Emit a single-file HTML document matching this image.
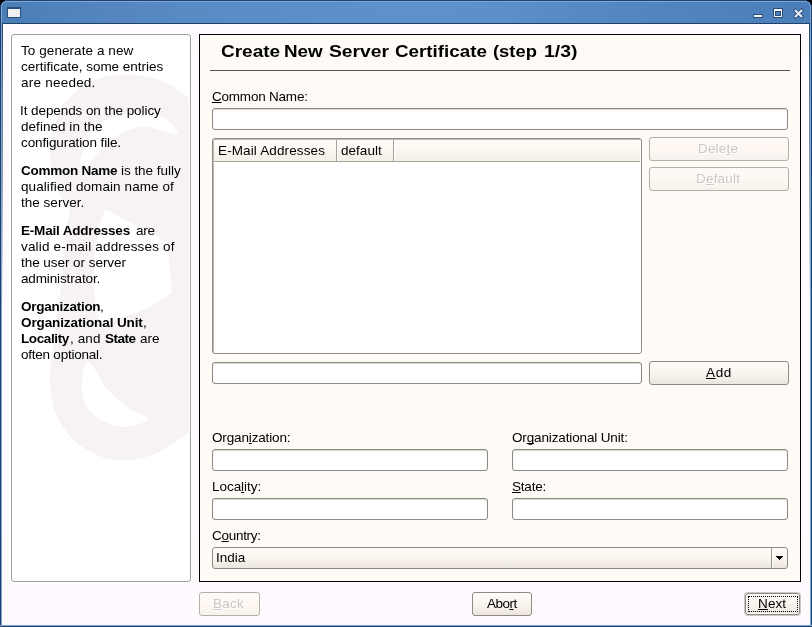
<!DOCTYPE html>
<html>
<head>
<meta charset="utf-8">
<title>YaST</title>
<style>
html,body{margin:0;padding:0;}
body{width:812px;height:627px;overflow:hidden;background:#fdfbfe;font-family:"Liberation Sans",sans-serif;font-size:13.5px;color:#000;position:relative;}
.abs{position:absolute;}
#win{position:absolute;left:0;top:0;width:812px;height:627px;background:#fefaff;overflow:hidden;}
.dith{position:absolute;left:2px;width:808px;background:#fffaff conic-gradient(from 0deg at 50% 50%,#f9f9f8 25%,#fffaff 0) 0 0/2px 2px;}
#titlebar{position:absolute;left:0;top:0;width:812px;height:24px;background:linear-gradient(to right,#4a7cb6 0px,#5082bc 60px,#5586bf 120px,#598bc5 200px,#5c8fc9 300px,#5e91cb 400px,#5d90ca 500px,#588bc5 560px,#5386c0 640px,#4f82bc 720px,#4b7eb8 812px);}
#tb-top{position:absolute;left:0;top:0;width:812px;height:1px;background:#23446a;}
#tb-hl{position:absolute;left:1px;top:1px;width:810px;height:1px;background:#7aa7dc;}
#tb-bot{position:absolute;left:2px;top:23px;width:808px;height:1px;background:#1f4068;}
#bl{position:absolute;left:0;top:0;width:2px;height:627px;background:linear-gradient(to right,#1f4068 0,#1f4068 1px,#7aa6da 1px);}
#bl3,#br3{position:absolute;left:2px;top:23px;width:1px;height:602px;background:linear-gradient(to bottom,#1f4068 0,#5f7797 72px,#9299a6 152px,#fdf9f3 280px);}
#br3{left:809px;}
#bl4,#br4{position:absolute;left:3px;top:24px;width:1px;height:601px;background:#fff;}
#br4{left:808px;}
#bl2{position:absolute;left:2px;top:2px;width:1px;height:21px;background:#4a7cb6;}
#br{position:absolute;left:810px;top:0;width:2px;height:627px;background:linear-gradient(to right,#7aa6da 0,#7aa6da 1px,#1f4068 1px);}
#bb{position:absolute;left:0;top:625px;width:812px;height:2px;background:linear-gradient(to bottom,#7aa6da 0,#7aa6da 1px,#1f4068 1px);}
.txt{position:absolute;white-space:nowrap;line-height:16px;height:16px;will-change:transform;}
.b{font-weight:bold;}
.s{white-space:pre;}
.hw{font-size:17px;line-height:20px;height:20px;transform-origin:0 50%;}
/*FIT*/
#h1a{letter-spacing:0.071px;margin-left:0px}
#h2a{letter-spacing:-0.01px;margin-left:0.0px}
#h3a{letter-spacing:0.23px;margin-left:0.0px}
#h4a{letter-spacing:-0.078px;margin-left:-1.0px}
#h5a{letter-spacing:0.038px;margin-left:0.0px}
#h6a{letter-spacing:-0.111px;margin-left:0.0px}
#h7a{letter-spacing:-0.25px;margin-left:0.0px}
#h7b{letter-spacing:-0.035px;margin-left:0px}
#h8a{letter-spacing:0.087px;margin-left:0.0px}
#h9a{letter-spacing:0.02px;margin-left:0.0px}
#h10a{letter-spacing:-0.193px;margin-left:0.0px}
#h10b{letter-spacing:-0.3px;margin-left:0.0px}
#h11a{letter-spacing:0.175px;margin-left:0.0px}
#h12a{letter-spacing:-0.047px;margin-left:0.0px}
#h13a{letter-spacing:-0.135px;margin-left:0.0px}
#h14a{letter-spacing:-0.263px;margin-left:0.0px}
#h14b{letter-spacing:0px;margin-left:0.0px}
#h15a{letter-spacing:-0.106px;margin-left:0.0px}
#h15b{letter-spacing:0px;margin-left:0.0px}
#h16a{letter-spacing:-0.379px;margin-left:0.0px}
#h16b{letter-spacing:0.1px;margin-left:0px}
#h16c{letter-spacing:-0.494px;margin-left:0.0px}
#h16d{letter-spacing:0.0px;margin-left:0.0px}
#h17a{letter-spacing:-0.236px;margin-left:0.0px}
#l1{letter-spacing:-0.215px;margin-left:0.0px}
#l2{letter-spacing:0.124px;margin-left:0px}
#l3{letter-spacing:0.036px;margin-left:0.0px}
#l4{letter-spacing:-0.148px;margin-left:0.0px}
#l5{letter-spacing:-0.139px;margin-left:0.0px}
#l6{letter-spacing:-0.045px;margin-left:0px}
#l7{letter-spacing:-0.2px;margin-left:0.0px}
#l8{letter-spacing:-0.282px;margin-left:0.0px}
#l9{letter-spacing:-0.006px;margin-left:-1.0px}
#b1{letter-spacing:0.18px}
#b2{letter-spacing:0.189px}
#b3{letter-spacing:0.675px}
#b4{letter-spacing:0.269px}
#b5{letter-spacing:-0.514px}
#b6{letter-spacing:0.115px}
#hw0{transform:scaleX(1.1177);margin-left:1px}
#hw1{transform:scaleX(1.1085);margin-left:-0.41px}
#hw2{transform:scaleX(1.1324);margin-left:0.45px}
#hw3{transform:scaleX(1.1053);margin-left:0.36px}
#hw4{transform:scaleX(1.0806);margin-left:-0.04px}
#hw5{transform:scaleX(1.1379);margin-left:-0.31px}
/*ENDFIT*/
u{text-decoration:underline;text-decoration-thickness:1px;text-underline-offset:1px;text-decoration-skip-ink:none;}
#help{position:absolute;left:11px;top:34px;width:178px;height:546px;border:1px solid #a19e96;border-radius:3px;background:#fff;overflow:hidden;box-shadow:0 0 0 1px #fff;}
#main{position:absolute;left:199px;top:34px;width:600px;height:546px;border:1px solid #000;background:#fefaf5;box-shadow:inset 0 0 0 1px #fff,0 0 0 1px #fff;}
.inp{position:absolute;box-sizing:border-box;height:22px;background:#fff;border:1px solid #8d8a84;border-radius:3px;box-shadow:inset 0 1px 1px #d8d5d0;}
.btn{position:absolute;box-sizing:border-box;height:24px;border:1px solid #8f8b84;border-radius:3px;background:linear-gradient(to bottom,#fffdfa 0,#f8f4ed 55%,#ebe5dc 100%);text-align:center;line-height:21px;white-space:nowrap;}
.bl{display:inline-block;will-change:transform;position:relative;}
#b1{left:-1px}#b2{left:-.5px}#b4{left:-.5px}#b5{left:-.5px}#b6{left:-.5px}
.btn.dis{color:#c9c8c6;text-shadow:1px 1px 0 #fff;border-color:#b3b0a6;background:linear-gradient(to bottom,#fff9fa 0,#fef7f2 50%,#f4f3ed 100%);}
</style>
</head>
<body>
<div id="win">
  <div class="abs" style="left:3px;top:24px;width:806px;height:1px;background:#fff;"></div>
  <div class="dith" style="top:34px;height:22px;"></div>
  <div class="dith" style="top:536px;height:90px;"></div>
  <div id="titlebar"></div>
  <div id="tb-top"></div><div id="tb-hl"></div><div id="tb-bot"></div>
  <div id="bl"></div><div id="bl2"></div><div id="bl3"></div><div id="bl4"></div><div id="br4"></div><div id="br3"></div><div id="br"></div><div id="bb"></div>
  <svg class="abs" style="left:0;top:0" width="812" height="6" viewBox="0 0 812 6"><path d="M0 0 H5 V1 H3 V2 H2 V3 H1 V5 H0 Z" fill="#000"/><path d="M812 0 H807 V1 H809 V2 H810 V3 H811 V5 H812 Z" fill="#000"/><path d="M3 1 H5 V2 H3 Z M2 2 H3 V3 H2 Z M1 3 H2 V5 H1Z" fill="#23446a"/><path d="M3 2 H5 V3 H3 Z M2 3 H3 V5 H2 Z" fill="#7aa7dc"/><path d="M809 1 H807 V2 H809 Z M810 2 H809 V3 H810 Z M811 3 H810 V5 H811Z" fill="#23446a"/><path d="M809 2 H807 V3 H809 Z M810 3 H809 V5 H810 Z" fill="#7aa7dc"/></svg>

  <!-- window menu icon -->
  <div class="abs" style="left:7px;top:7px;width:14px;height:11px;background:#2b4f7c;"></div>
  <div class="abs" style="left:8px;top:9px;width:12px;height:8px;background:#f0f0f0;"></div>

  <!-- window controls -->
  <svg class="abs" style="left:750px;top:4px" width="56" height="18" viewBox="750 4 56 18" shape-rendering="crispEdges">
    <rect x="753" y="14" width="10" height="4" fill="#2a4d7b"/>
    <rect x="754" y="15" width="8" height="2" fill="#f4f6fa"/>
    <rect x="773" y="8" width="10" height="10" fill="#2a4d7b"/>
    <rect x="774" y="9" width="8" height="8" fill="#f4f6fa"/>
    <rect x="775" y="11" width="6" height="5" fill="#2a4d7b"/>
    <rect x="776" y="12" width="4" height="3" fill="#4e81bb"/>
  </svg>
  <svg class="abs" style="left:790px;top:5px" width="16" height="16" viewBox="790 5 16 16">
    <path d="M795.300 10.300 L801.700 16.700 M801.700 10.300 L795.300 16.700" stroke="#2a4d7b" stroke-width="3.800" stroke-linecap="round" fill="none"/>
    <path d="M795.500 10.500 L801.500 16.500 M801.500 10.500 L795.500 16.500" stroke="#e8eef6" stroke-width="2.100" stroke-linecap="round" fill="none"/>
  </svg>
  <!-- help panel -->
  <div id="help">
    <svg class="abs" style="left:0;top:0" width="177" height="546" viewBox="12 35 177 546">
      <path d="M195.0 103.0 C193.0 101.4 188.0 97.0 183.0 93.5 C178.0 90.0 172.1 85.0 165.0 82.0 C157.9 79.0 149.0 76.7 140.5 75.6 C132.0 74.5 123.2 74.1 114.0 75.6 C104.8 77.1 93.7 79.3 85.0 84.5 C76.3 89.7 67.5 98.6 62.0 107.0 C56.5 115.4 54.0 127.5 52.0 135.0 C50.0 142.5 49.8 145.2 50.0 152.0 C50.2 158.8 51.3 168.8 53.0 176.0 C54.7 183.2 57.5 189.7 60.0 195.0 C62.5 200.3 66.3 205.0 68.0 208.0 C69.7 211.0 70.2 210.2 70.0 213.0 C69.8 215.8 67.8 220.5 67.0 225.0 C66.2 229.5 65.6 233.5 65.0 240.0 C64.4 246.5 64.2 256.0 63.5 264.0 C62.8 272.0 62.4 277.0 61.0 288.0 C59.6 299.0 56.8 314.5 55.0 330.0 C53.2 345.5 49.8 367.0 50.0 381.0 C50.2 395.0 51.8 404.0 56.0 414.0 C60.2 424.0 67.3 433.8 75.0 441.0 C82.7 448.2 92.9 453.8 102.0 457.0 C111.1 460.2 120.0 460.8 129.5 460.0 C139.0 459.2 149.2 456.5 159.0 452.0 C168.8 447.5 182.0 437.2 188.0 433.0 C194.0 428.8 193.8 428.0 195.0 427.0 Z" fill="#f6f2f6"/>
      <path d="M178.5 134.0 C177.8 131.4 168.8 119.4 160.6 116.0 C152.3 112.6 139.8 111.8 129.0 113.6 C118.2 115.4 104.0 119.6 96.0 127.0 C88.0 134.4 83.0 150.5 81.0 158.0 C79.0 165.5 81.9 172.0 84.0 172.0 C86.1 172.0 88.6 163.7 93.6 158.0 C98.5 152.3 105.9 143.2 113.7 138.0 C121.5 132.8 131.9 128.1 140.5 127.0 C149.1 125.9 158.7 130.3 165.0 131.5 C171.3 132.7 179.2 136.6 178.5 134.0 Z" fill="#ffffff"/>
      <path d="M105 209 L167 242 L172 293 L144 310 L100 325 C95 305 93 285 93.500 269 C94 248 98 228 105 209 Z" fill="#ffffff"/>
      <path d="M88.8 362.0 C93.1 363.4 100.9 381.7 107.7 389.4 C114.5 397.1 122.6 403.5 129.4 408.4 C136.2 413.3 149.3 415.9 148.4 419.0 C147.5 422.1 132.1 427.0 124.0 427.0 C115.9 427.0 106.1 423.0 99.6 419.0 C93.0 415.0 87.6 409.3 84.7 403.0 C81.8 396.7 81.3 387.8 82.0 381.0 C82.7 374.2 84.5 360.6 88.8 362.0 Z" fill="#ffffff"/>
    </svg>
  </div>

  <!-- main panel -->
  <div id="main"></div>

  <!-- help text -->
  <div class="txt" id="h1a" style="left:21px;top:43px">To generate a new</div>
  <div class="txt" id="h2a" style="left:21px;top:59px">certificate, some entries</div>
  <div class="txt" id="h3a" style="left:21px;top:75px">are needed.</div>
  <div class="txt" id="h4a" style="left:21px;top:103px">It depends on the policy</div>
  <div class="txt" id="h5a" style="left:21px;top:119px">defined in the</div>
  <div class="txt" id="h6a" style="left:21px;top:135px">configuration file.</div>
  <div class="txt b" id="h7a" style="left:21px;top:163px">Common Name</div>
  <div class="txt" id="h7b" style="left:121px;top:163px">is the fully</div>
  <div class="txt" id="h8a" style="left:21px;top:179px">qualified domain name of</div>
  <div class="txt" id="h9a" style="left:21px;top:195px">the server.</div>
  <div class="txt b" id="h10a" style="left:21px;top:223px">E-Mail Addresses</div>
  <div class="txt" id="h10b" style="left:135.5px;top:223px">are</div>
  <div class="txt" id="h11a" style="left:21px;top:239px">valid e-mail addresses of</div>
  <div class="txt" id="h12a" style="left:21px;top:255px">the user or server</div>
  <div class="txt" id="h13a" style="left:21px;top:271px">administrator.</div>
  <div class="txt b" id="h14a" style="left:21px;top:299px">Organization</div>
  <div class="txt" id="h14b" style="left:100.3px;top:299px">,</div>
  <div class="txt b" id="h15a" style="left:21px;top:315px">Organizational Unit</div>
  <div class="txt" id="h15b" style="left:143.3px;top:315px">,</div>
  <div class="txt b" id="h16a" style="left:21px;top:331px">Locality</div>
  <div class="txt" id="h16b" style="left:70.3px;top:331px">, and</div>
  <div class="txt b" id="h16c" style="left:105px;top:331px">State</div>
  <div class="txt" id="h16d" style="left:139.8px;top:331px">are</div>
  <div class="txt" id="h17a" style="left:21px;top:347px">often optional.</div>

  <!-- heading -->
  <div class="txt b hw" id="hw0" style="left:219.7px;top:42px">Create</div>
  <div class="txt b hw" id="hw1" style="left:284.5px;top:42px">New</div>
  <div class="txt b hw" id="hw2" style="left:329.0px;top:42px">Server</div>
  <div class="txt b hw" id="hw3" style="left:394.2px;top:42px">Certificate</div>
  <div class="txt b hw" id="hw4" style="left:492.6px;top:42px">(step</div>
  <div class="txt b hw" id="hw5" style="left:543.9px;top:42px">1/3)</div>
  <div class="abs" style="left:210px;top:70px;width:580px;height:1px;background:#55534c;"></div>

  <div class="txt" id="l1" style="left:212px;top:89px"><u>C</u>ommon Name:</div>
  <div class="inp" style="left:212px;top:108px;width:576px;"></div>

  <!-- table -->
  <div class="abs" id="table" style="left:212px;top:138px;width:430px;height:216px;box-sizing:border-box;border:1px solid #8d8e88;border-radius:3px;background:#fff;box-shadow:inset 1px 1px 0 #bcbcb2;"></div>
  <div class="abs" style="left:214px;top:140px;width:426px;height:21px;background:linear-gradient(to bottom,#ffffff 0,#fffdfb 1px,#fef8f3 8px,#f6f4ed 13px,#f4efe8 21px);border-bottom:1px solid #a5a59b;"></div>
  <div class="abs" style="left:336px;top:140px;width:1px;height:21px;background:#a3a39a;"></div><div class="abs" style="left:337px;top:140px;width:1px;height:21px;background:#fff;"></div>
  <div class="abs" style="left:393px;top:140px;width:1px;height:21px;background:#a3a39a;"></div><div class="abs" style="left:394px;top:140px;width:1px;height:21px;background:#fff;"></div>
  <div class="txt" id="l2" style="left:218px;top:143px">E-Mail Addresses</div>
  <div class="txt" id="l3" style="left:341px;top:143px">default</div>

  <div class="btn dis" style="left:649px;top:137px;width:140px;"><span id="b1" class="bl">Dele<u>t</u>e</span></div>
  <div class="btn dis" style="left:649px;top:167px;width:140px;"><span id="b2" class="bl">D<u>e</u>fault</span></div>

  <div class="inp" style="left:212px;top:362px;width:430px;"></div>
  <div class="btn" style="left:649px;top:361px;width:140px;"><span id="b3" class="bl"><u>A</u>dd</span></div>

  <div class="txt" id="l4" style="left:212px;top:430px">Organ<u>i</u>zation:</div>
  <div class="inp" style="left:212px;top:449px;width:276px;"></div>
  <div class="txt" id="l5" style="left:512px;top:430px">Or<u>g</u>anizational Unit:</div>
  <div class="inp" style="left:512px;top:449px;width:276px;"></div>

  <div class="txt" id="l6" style="left:212px;top:479px">Loca<u>l</u>ity:</div>
  <div class="inp" style="left:212px;top:498px;width:276px;"></div>
  <div class="txt" id="l7" style="left:512px;top:479px"><u>S</u>tate:</div>
  <div class="inp" style="left:512px;top:498px;width:276px;"></div>

  <div class="txt" id="l8" style="left:212px;top:528px">C<u>o</u>untry:</div>
  <div class="abs" id="combo" style="left:212px;top:547px;width:576px;height:22px;box-sizing:border-box;border:1px solid #8f8b84;border-radius:3px;background:linear-gradient(to bottom,#fffdfa 0,#f8f4ed 55%,#ebe5dc 100%);"></div>
  <div class="abs" style="left:771px;top:548px;width:1px;height:20px;background:#9a978f;"></div>
  <div class="abs" style="left:772px;top:548px;width:1px;height:20px;background:rgba(255,255,255,.7);"></div>
  <svg class="abs" style="left:775px;top:555px" width="10" height="6" viewBox="775 555 10 6" shape-rendering="crispEdges"><path d="M776 556 H783 V557 H782 V558 H781 V559 H780 V560 H779 V559 H778 V558 H777 V557 H776 Z" fill="#000"/></svg>
  <div class="txt" id="l9" style="left:217px;top:550px">India</div>

  <!-- bottom buttons -->
  <div class="btn dis" style="left:199px;top:592px;width:61px;"><span id="b4" class="bl"><u>B</u>ack</span></div>
  <div class="btn" style="left:472px;top:592px;width:60px;"><span id="b5" class="bl">Abo<u>r</u>t</span></div>
  <div class="btn" id="next" style="left:745px;top:593px;width:55px;height:22px;line-height:19px;border-color:#8e8b84;box-shadow:0 0 0 1px #cbc8c1,inset 0 0 0 1px #fff;"><span id="b6" class="bl"><u>N</u>ext</span></div>
  <div class="abs" style="left:748px;top:596px;width:48px;height:14px;border:1px dotted #000;"></div>
</div>
</body>
</html>
